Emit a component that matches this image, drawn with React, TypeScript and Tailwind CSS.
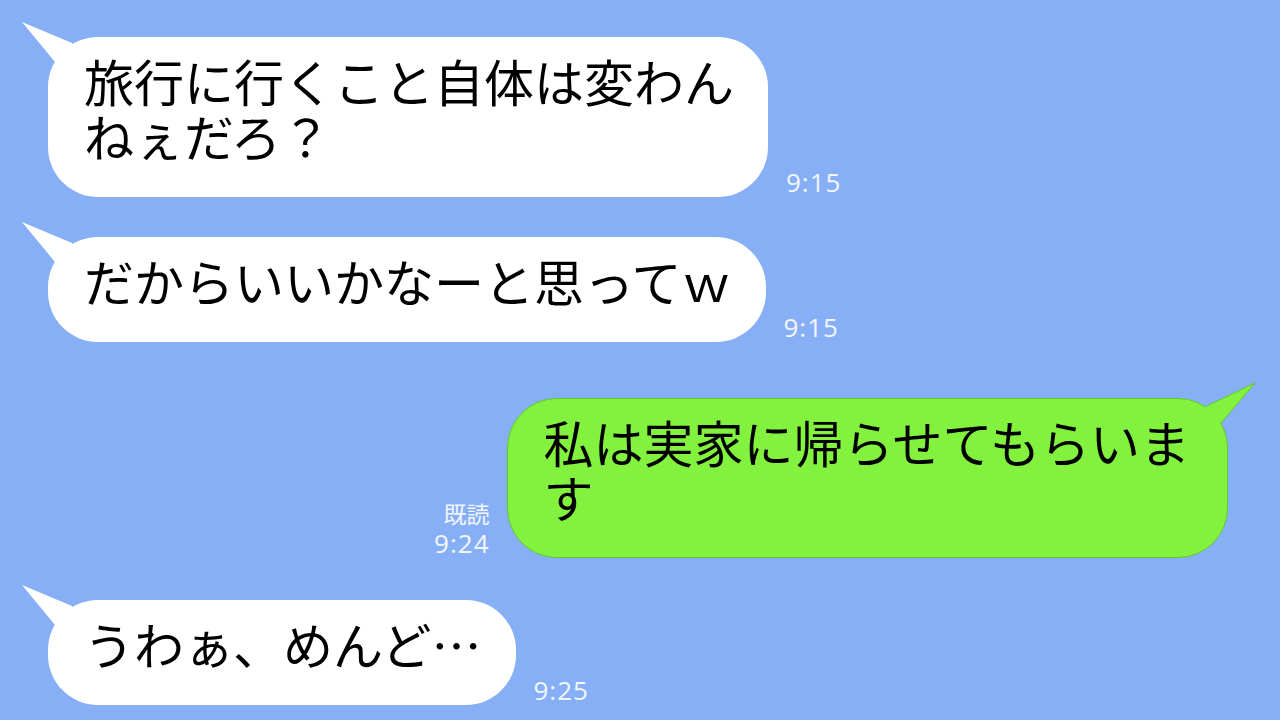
import type { ReactNode } from "react";

const jp = "font-['Noto_Sans_CJK_JP',sans-serif]";

function LeftTail() {
  return (
    <svg
      className="absolute -left-[28px] -top-[17px] w-[60px] h-[50px] overflow-visible"
      viewBox="0 0 60 50"
    >
      <polygon points="2,2 52,23 58,46 35,42" fill="#ffffff" />
    </svg>
  );
}

function RightTail() {
  return (
    <svg
      className="absolute -right-[30px] -top-[18px] w-[60px] h-[50px] overflow-visible"
      viewBox="0 0 60 50"
    >
      <polygon points="58,2 9,25 4,46 24,42" fill="#83f23f" />
      <polyline points="9,25.5 58,2 24,42" fill="none" stroke="#62c92c" strokeWidth="1" />
    </svg>
  );
}

function Time({ children }: { children: ReactNode }) {
  return (
    <div className="font-['Open_Sans',sans-serif] text-[26px] leading-[30px] tracking-[1px] text-[#f3f6ff]">
      {children}
    </div>
  );
}

function Received({ lines, time, className = "" }: { lines: string[]; time: string; className?: string }) {
  return (
    <div className={`flex items-end gap-[18px] ${className}`}>
      <div
        className={`relative bg-white rounded-[50px] pl-[36px] pr-[34px] pt-[16px] pb-[34px] text-[50px] leading-[55px] text-black whitespace-nowrap ${jp}`}
      >
        <LeftTail />
        {lines.map((l) => (
          <div key={l}>{l}</div>
        ))}
      </div>
      <Time>{time}</Time>
    </div>
  );
}

export default function App() {
  return (
    <div className="w-[1280px] h-[720px] overflow-hidden bg-[#87aff6] pl-[48px] pt-[37px] flex flex-col">
      <Received lines={["旅行に行くこと自体は変わん", "ねぇだろ？"]} time="9:15" />
      <Received lines={["だからいいかなーと思ってｗ"]} time="9:15" className="mt-[40px]" />

      {/* sent message */}
      <div className="mt-[56px] flex items-end justify-end gap-[17px] pr-[52px]">
        <div className="flex flex-col items-end">
          <div className={`text-[23px] leading-[30px] text-[#f3f6ff] ${jp}`}>既読</div>
          <Time>9:24</Time>
        </div>
        <div
          className={`relative bg-[#83f23f] border border-[#62c92c] rounded-[50px] pl-[36px] pr-[37px] pt-[15px] pb-[33px] text-[50px] leading-[55px] text-black whitespace-nowrap ${jp}`}
        >
          <RightTail />
          <div>私は実家に帰らせてもらいま</div>
          <div>す</div>
        </div>
      </div>

      <Received lines={["うわぁ、めんど…"]} time="9:25" className="mt-[42px]" />
    </div>
  );
}
